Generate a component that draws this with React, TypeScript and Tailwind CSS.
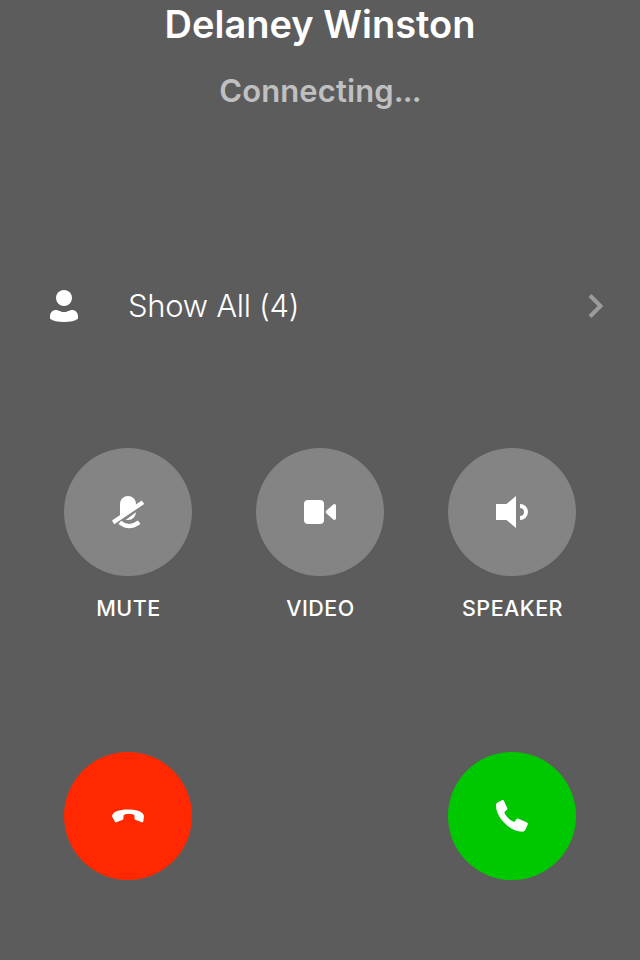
import type { ReactNode } from "react";

function Icon({ children }: { children: ReactNode }) {
  return (
    <svg viewBox="0 0 48 48" className="size-12" fill="currentColor" aria-hidden="true">
      {children}
    </svg>
  );
}

function Control({ label, children }: { label: string; children: ReactNode }) {
  return (
    <div className="flex w-32 flex-col items-center">
      <button aria-label={label} className="flex size-32 items-center justify-center rounded-full bg-[#848484]">
        <Icon>{children}</Icon>
      </button>
      <span className="mt-4 pl-px text-[21.5px] leading-8 font-[550] tracking-[0.5px] whitespace-nowrap">{label}</span>
    </div>
  );
}

export default function App() {
  return (
    <main className="flex h-[960px] w-[640px] flex-col overflow-hidden bg-[#5c5c5c] font-['Inter',sans-serif] text-white">
      <header className="flex h-[116px] flex-col items-center">
        <h1 className="text-[38px] leading-[48px] font-semibold">Delaney Winston</h1>
        <p className="mt-[23px] text-[31px] leading-10 font-[580] text-[#c0c0c0]">
          <span className="tracking-[0.1px]">Connecting</span>
          <span className="tracking-[-0.9px]">...</span>
        </p>
      </header>

      <button className="mt-[140px] flex h-[100px] items-center pr-8 pl-10 text-left">
        <svg viewBox="0 0 48 48" className="size-12" fill="currentColor" aria-hidden="true">
          <circle cx="24" cy="16" r="8" />
          <path d="M10 34.500C10 30.500 12.500 28 16 28c2.800 0 4 2 8 2s5.200-2 8-2c3.500 0 6 2.500 6 6.500v2.300C35 39 30 40 24 40s-11-1-14-3.200z" />
        </svg>
        <span className="ml-10 flex-1 text-[31px] leading-10 font-light tracking-[-0.3px]">Show All (4)</span>
        <svg viewBox="0 0 24 32" className="h-8 w-6" fill="none" stroke="#9b9b9b" strokeWidth="4" aria-hidden="true">
          <path d="M6 5.500 16.500 16 6 26.500" />
        </svg>
      </button>

      <section className="mt-[92px] flex justify-between px-16">
        <Control label="MUTE">
          <path d="M16 16a8 8 0 0 1 16 0v3L16 29.500z" />
          <path d="M32 24.300a8 7.700 0 0 1-8 7.700h-2.300z" />
          <path d="M8 32.600 37.800 12.400 40.200 16 10.200 36.200z" />
          <path d="M15.800 34.300Q25 41.800 35.200 34.300" fill="none" stroke="currentColor" strokeWidth="4.200" />
        </Control>
        <Control label="VIDEO">
          <rect x="8" y="12" width="20" height="24" rx="4" />
          <path d="M30.500 22.500 37 16.700c1.300-1.200 3-.6 3 1.300v12c0 1.900-1.700 2.500-3 1.300l-6.500-5.800c-1-.9-1-2.100 0-3z" />
        </Control>
        <Control label="SPEAKER">
          <path d="M8 16h10.500L28 8v32l-9.500-8H8z" />
          <path d="M32 18a6 6 0 0 1 0 12" fill="none" stroke="currentColor" strokeWidth="4" />
        </Control>
      </section>

      <footer className="mt-32 flex justify-between px-16">
        <button aria-label="Decline" className="flex size-32 items-center justify-center rounded-full bg-[#ff2800]">
          <Icon>
            <path d="M8 24.500C8 20 15 17.500 24 17.500s16 2.500 16 7l-.6 4.600c-.2 1.200-.7 1.500-1.700 1.200l-5.900-2.200c-1-.4-1.300-1-1.300-2v-2.200c0-.9-.4-1.400-1.300-1.500-3-.5-5.400-.5-8.400 0-.9.100-1.300.6-1.300 1.500v2.200c0 1-.3 1.600-1.300 2l-5.900 2.200c-1 .3-1.500 0-1.700-1.200z" />
          </Icon>
        </button>
        <button aria-label="Accept" className="flex size-32 items-center justify-center rounded-full bg-[#00c800]">
          <Icon>
            <path d="M9.200 10.800 14 8.200c1-.5 1.600-.2 2 .7l3.200 7c.4.900.2 1.500-.5 2.100l-1.500 1.300c-.8.700-.9 1.300-.4 2.300 1.700 3.300 4.800 6.300 8.200 7.900 1 .5 1.700.4 2.300-.5l1-1.700c.5-.8 1.200-1 2-.6l8.300 3.500c1.200.5 1.500 1.200 1.100 2.200l-2.200 5c-.6 1.300-1.500 2-3.300 2.300C22 39.700 7.700 25.500 8 13.500c0-1.300.3-2.200 1.200-2.700z" />
          </Icon>
        </button>
      </footer>
    </main>
  );
}
